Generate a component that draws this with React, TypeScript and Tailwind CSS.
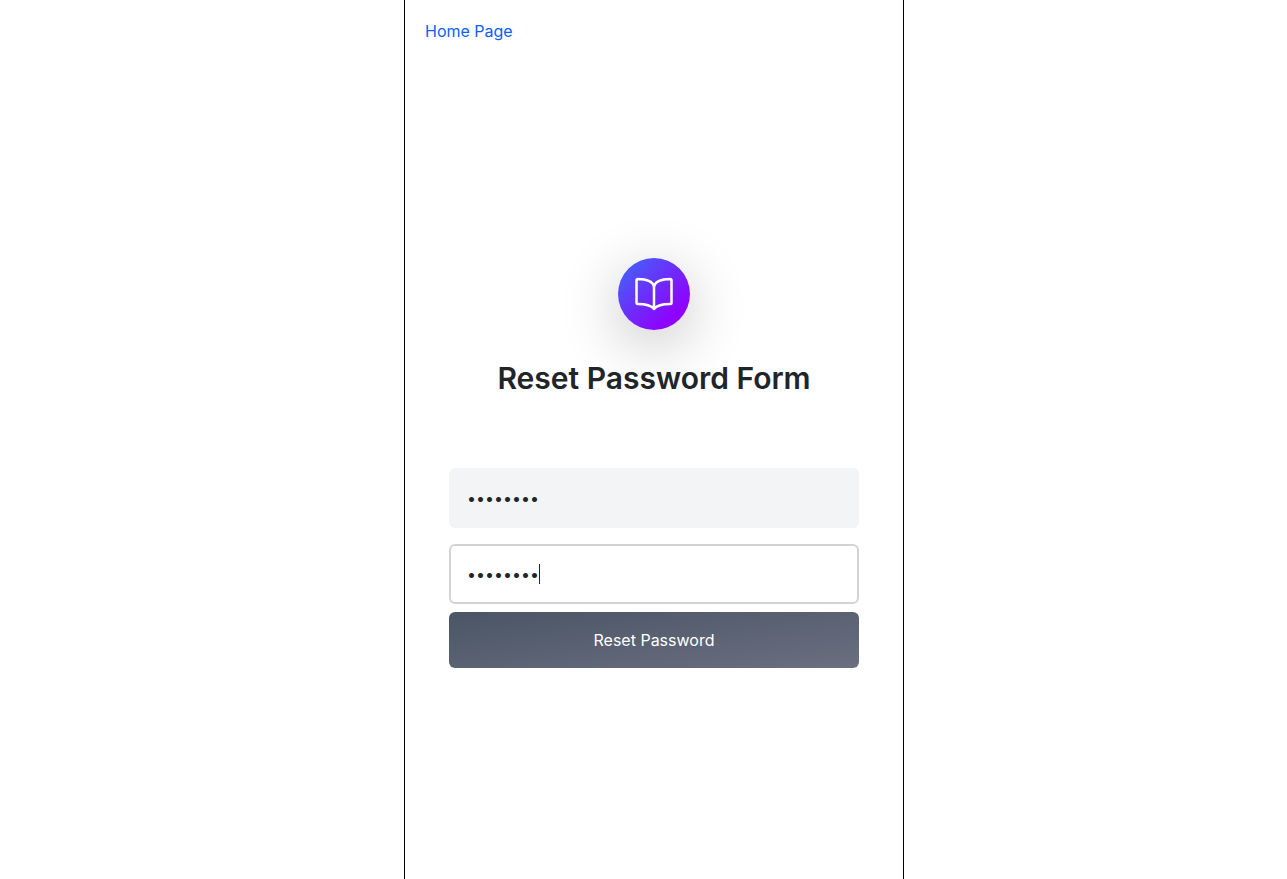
import React from "react";
import { IoBookOutline } from "react-icons/io5";

export default function App() {
  return (
    <div className="min-h-screen bg-white pl-[21px] font-['Inter',sans-serif] text-base text-[#212529]">
      <main className="mx-auto flex min-h-screen w-full max-w-[500px] flex-col border-x border-black">
        <nav className="px-5 pt-[19px] pb-1">
          <a href="#home" className="text-[#0d5efd]">Home Page</a>
        </nav>
        <section className="flex flex-1 flex-col items-center justify-center px-11">
          <div className="flex size-18 items-center justify-center rounded-full bg-[linear-gradient(135deg,#3b6cf8,#9000ff_80%)] text-white shadow-[0_14px_60px_rgba(0,0,0,0.24)]">
            <IoBookOutline className="size-10" aria-hidden="true" />
          </div>
          <h1 className="mt-[30px] text-3xl font-semibold">Reset Password Form</h1>
          <form className="mt-18 flex w-full flex-col">
            <input type="password" aria-label="New password" defaultValue="password" className="h-15 w-full rounded-md bg-gray-100 px-[18px] outline-none" />
            <div className="relative mt-4">
              <input type="password" aria-label="Confirm password" defaultValue="password" autoFocus className="block h-15 w-full rounded-md border-2 border-[#d3d3d3] bg-white px-4 caret-transparent outline-none" />
              <span className="pointer-events-none absolute top-5 left-[90px] h-5 w-px bg-[#212529]" aria-hidden="true" />
            </div>
            <button type="button" className="mt-2 h-14 w-full rounded-md bg-[linear-gradient(to_bottom_right,#4a5565,#6b6f80)] text-white">Reset Password</button>
          </form>
        </section>
      </main>
    </div>
  );
}
